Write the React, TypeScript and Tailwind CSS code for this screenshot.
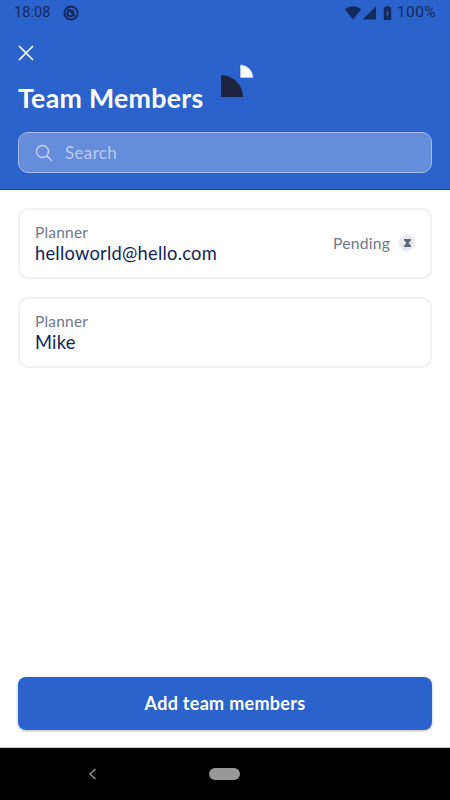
import React from "react";

const font = { fontFamily: '"Lato", "Noto Sans", sans-serif' };

function StatusBar() {
  return (
    <div className="flex h-[26px] items-center justify-between pl-[14px] pr-[14px] text-[#14295c] font-['Roboto',sans-serif] text-[14.5px]">
      <div className="flex items-center gap-[12px]">
        <span className="leading-none tracking-[0.1px]">18:08</span>
        <svg width="16" height="16" viewBox="0 0 16 16" fill="none" stroke="currentColor">
          <circle cx="8" cy="8" r="6.6" strokeWidth="2" />
          <circle cx="7.4" cy="8.2" r="3" strokeWidth="2" />
          <path d="M5 4 L12 11" strokeWidth="1.6" />
        </svg>
      </div>
      <div className="flex items-center">
        <svg width="16" height="14" viewBox="0 0 16 14" className="mr-[1px]">
          <path d="M0 3.5 C4.5 -0.8 11.5 -0.8 16 3.5 L8 13.5 Z" fill="currentColor" />
        </svg>
        <svg width="14" height="14" viewBox="0 0 14 14" className="mr-[7px]">
          <path d="M14 0.5 V13.5 H0.5 Z" fill="currentColor" />
        </svg>
        <svg width="9" height="14" viewBox="0 0 9 14" className="mr-[5px]">
          <path d="M3 0 H6 V1.2 H8.2 V14 H0.8 V1.2 H3 Z" fill="currentColor" />
          <path d="M5 3.5 L2.8 8 H4.2 L3.8 11 L6.2 6.5 H4.7 Z" fill="#2b62cb" />
        </svg>
        <span className="text-[15.5px] leading-none tracking-[0.4px]">100%</span>
      </div>
    </div>
  );
}

function MemberCard({ email, pending }: { email: string; pending?: boolean }) {
  return (
    <div className="flex h-[71px] items-center justify-between rounded-[10px] border-2 border-[#f0f1f3] pl-[15px] pr-[15px]">
      <div className="flex flex-col">
        <span className="text-[15.5px] leading-[20px] tracking-[0.2px] text-[#6e7888]">Planner</span>
        <span className="text-[18.3px] leading-[23px] tracking-[0.25px] text-[#101f5c]">{email}</span>
      </div>
      {pending && (
        <div className="flex items-center gap-[9px]">
          <span className="text-[15.7px] tracking-[0.2px] text-[#6e7888]">Pending</span>
          <span className="flex h-[16px] w-[16px] items-center justify-center rounded-full bg-[#e9eaef]">
            <svg width="9" height="8" viewBox="0 0 9 8">
              <path d="M1 0 H8 V1.2 L5.5 4 L8 6.8 V8 H1 V6.8 L3.5 4 L1 1.2 Z" fill="#5d6678" />
            </svg>
          </span>
        </div>
      )}
    </div>
  );
}

export default function App() {
  return (
    <div className="flex h-[800px] w-[450px] flex-col overflow-hidden bg-white" style={font}>
      <header className="border-b border-[#0a3fb0] bg-[#2b62cb] h-[190px]">
        <StatusBar />
        <div className="px-[18px]">
          <svg width="16" height="16" viewBox="0 0 16 16" className="mt-[19px]" fill="none" stroke="white" strokeWidth="1.7">
            <path d="M1 1 L15 15 M15 1 L1 15" />
          </svg>
          <div className="relative mt-[19px] h-[36px]">
            <h1 className="text-[26.7px] font-bold leading-[36px] tracking-[0.3px] text-white">Team Members</h1>
            <svg width="34" height="33" viewBox="0 0 34 33" className="absolute left-[203px] top-[-16px]">
              <path d="M0 33 V11 A22 22 0 0 1 22 33 Z" fill="#1c2440" />
              <path d="M19 14 V0.5 A13.5 13.5 0 0 1 32.5 14 Z" fill="#fbfcff" stroke="#1f59d8" strokeWidth="0.7" />
            </svg>
          </div>
          <div className="mt-[16px] flex h-[41px] items-center rounded-[10px] border border-[#a6bde9] bg-[#668ddb] pl-[16px]">
            <svg width="18" height="18" viewBox="0 0 18 18" fill="none" stroke="#c3d3f3" strokeWidth="1.5">
              <circle cx="7.5" cy="7.5" r="6" />
              <path d="M12 12 L17 17" />
            </svg>
            <span className="ml-[12px] text-[17px] tracking-[0.35px] text-[#b9cbf0]">Search</span>
          </div>
        </div>
      </header>
      <main className="flex flex-1 flex-col px-[18px] pb-[17px]">
        <div className="mt-[18px] flex flex-col gap-[18px]">
          <MemberCard email="helloworld@hello.com" pending />
          <MemberCard email="Mike" />
        </div>
        <button className="mt-auto h-[53px] rounded-[8px] bg-[#2b62cb] text-[18px] font-bold tracking-[0.3px] text-white shadow-[0_1px_3px_rgba(0,0,0,0.3)]">
          Add team members
        </button>
      </main>
      <nav className="flex h-[53px] items-center border-t border-[#c9c9c9] bg-black pl-[88px]">
        <svg width="9" height="12" viewBox="0 0 9 12" fill="none" stroke="#9a9a9a" strokeWidth="1.4">
          <path d="M7.5 1 L2 6 L7.5 11" />
        </svg>
        <span className="ml-[112px] h-[12px] w-[31px] rounded-full bg-[#999999]" />
      </nav>
    </div>
  );
}
